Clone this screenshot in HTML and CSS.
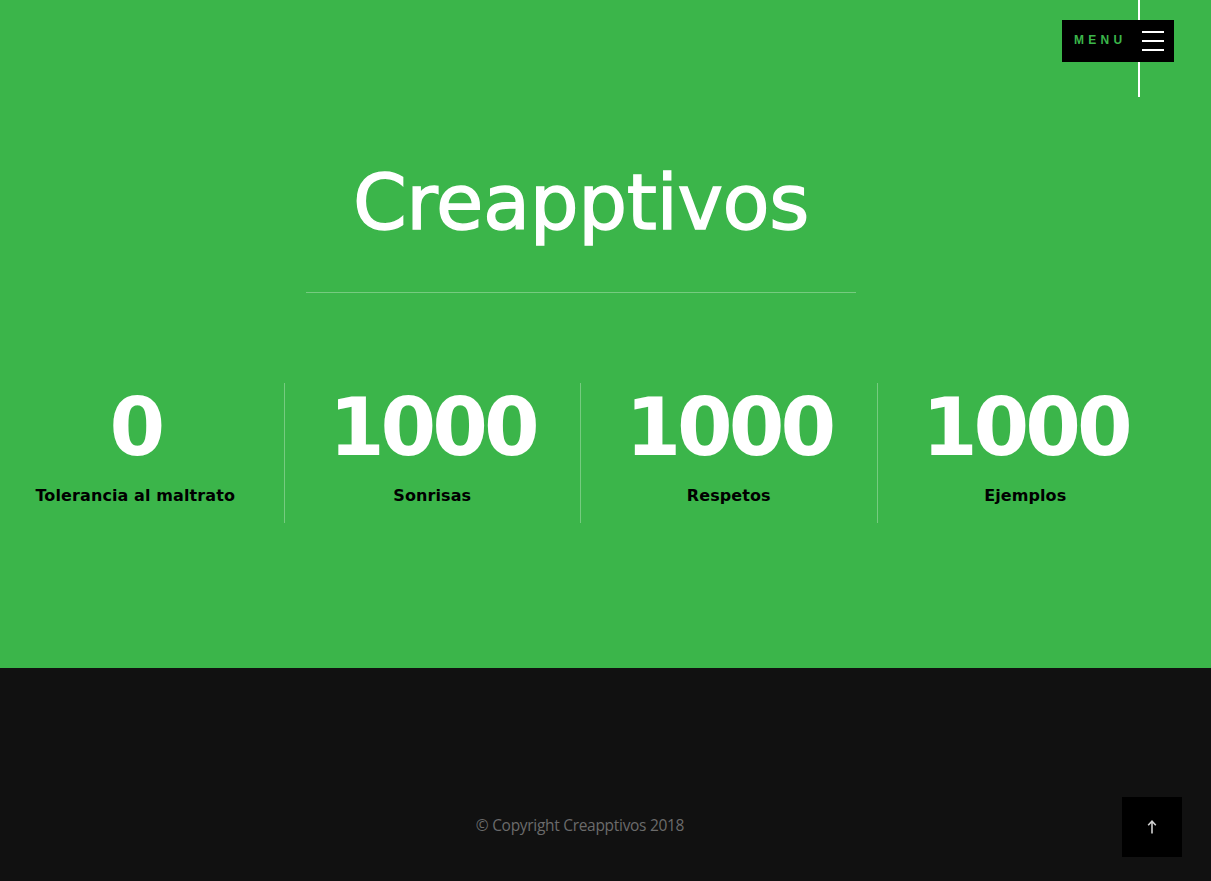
FILE: index.html
```html
<!DOCTYPE html>
<html lang="es">
<head>
<meta charset="utf-8">
<title>Creapptivos</title>
<link rel="stylesheet" href="styles.css">
</head>
<body>
<div class="menu-line"></div>
<button class="menu-btn" type="button">
  <span class="menu-label">MENU</span>
  <span class="burger"><i></i><i></i><i></i></span>
</button>

<section class="hero">
  <div class="hero-inner">
    <h1 class="title">Creapptivos</h1>
    <hr class="rule">
    <div class="stats">
      <div class="stat">
        <div class="stat-num">0</div>
        <div class="stat-label">Tolerancia al maltrato</div>
      </div>
      <div class="stat">
        <div class="stat-num">1000</div>
        <div class="stat-label">Sonrisas</div>
      </div>
      <div class="stat">
        <div class="stat-num">1000</div>
        <div class="stat-label">Respetos</div>
      </div>
      <div class="stat">
        <div class="stat-num">1000</div>
        <div class="stat-label">Ejemplos</div>
      </div>
    </div>
  </div>
</section>

<footer class="footer">
  <p class="copyright">© Copyright Creapptivos 2018</p>
</footer>

<a class="to-top" href="#">
  <svg width="10" height="14" viewBox="0 0 10 14" aria-hidden="true">
    <path d="M5 13.5V1.5M1.2 5.2L5 1.2 8.8 5.2" fill="none" stroke="#d0d0d0" stroke-width="1.6"/>
  </svg>
</a>
</body>
</html>
```

FILE: styles.css
```css
* { box-sizing: border-box; }
html, body { margin: 0; padding: 0; }
body {
  font-family: "DejaVu Sans", "Noto Sans", sans-serif;
  background: #111111;
  overflow: hidden;
  position: relative;
  height: 881px;
}

.menu-line {
  position: absolute;
  left: 1138px;
  top: 0;
  width: 2px;
  height: 97px;
  background: #ffffff;
  z-index: 1;
}
.menu-btn {
  position: absolute;
  top: 20px;
  left: 1062px;
  width: 112px;
  height: 42px;
  background: #000;
  border: 0;
  padding: 0 10px 0 12px;
  display: flex;
  align-items: center;
  justify-content: space-between;
  z-index: 2;
  cursor: pointer;
}
.menu-label {
  color: #3bb54a;
  font-family: "Liberation Sans", Arial, sans-serif;
  font-weight: 700;
  font-size: 12px;
  letter-spacing: 4.3px;
  margin-top: -2px;
}
.burger {
  display: flex;
  flex-direction: column;
  gap: 7px;
  width: 22px;
}
.burger i {
  display: block;
  height: 2px;
  background: #fff;
}

.hero {
  background: #3bb54a;
  height: 668px;
  padding-top: 153px;
}
.hero-inner {
  width: 1162px;
}
.title {
  margin: 0;
  text-align: center;
  color: #fff;
  font-family: "DejaVu Sans", sans-serif;
  font-weight: 500;
  font-size: 77px;
  line-height: 100px;
  letter-spacing: -0.4px;
  -webkit-text-stroke: 1.4px #fff;
}
.rule {
  width: 550px;
  margin: 39px auto 0;
  border: 0;
  height: 1px;
  background: rgba(255, 255, 255, 0.3);
}
.stats {
  display: grid;
  grid-template-columns: repeat(4, 1fr);
  width: 1186px;
  margin: 90px 0 0 -13px;
}
.stat {
  text-align: center;
  height: 140px;
  border-left: 1px solid rgba(255, 255, 255, 0.3);
}
.stat:first-child { border-left: 0; }
.stat-num {
  color: #fff;
  font-family: "DejaVu Sans", sans-serif;
  font-weight: 700;
  font-size: 80px;
  line-height: 80px;
  margin-top: 5px;
  letter-spacing: -4px;
}
.stat-label {
  margin-top: 18px;
  color: #000;
  font-family: "DejaVu Sans", sans-serif;
  font-weight: 700;
  font-size: 16px;
  line-height: 20px;
  letter-spacing: 0.1px;
}

.footer {
  height: 213px;
  background: #111111;
  padding-top: 147px;
}
.copyright {
  width: 1160px;
  margin: 0;
  text-align: center;
  color: #6b6b6b;
  font-family: "Open Sans", sans-serif;
  font-size: 15.5px;
  letter-spacing: -0.3px;
  line-height: 20px;
}
.to-top {
  position: absolute;
  left: 1122px;
  top: 797px;
  width: 60px;
  height: 60px;
  background: #000;
  display: flex;
  align-items: center;
  justify-content: center;
}
```
